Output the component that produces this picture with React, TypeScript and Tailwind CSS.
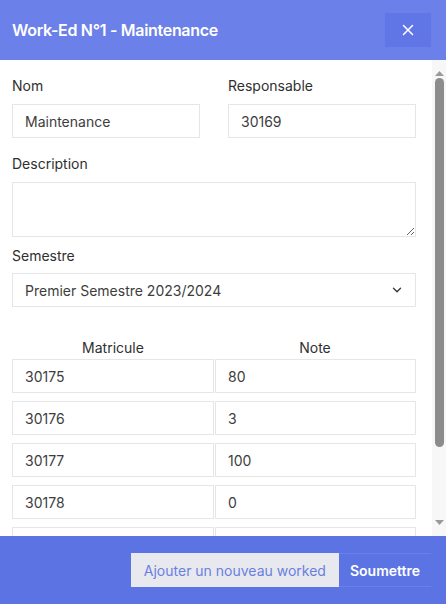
import { X, ChevronDown } from "lucide-react";

const rows = [
  { matricule: "30175", note: "80" },
  { matricule: "30176", note: "3" },
  { matricule: "30177", note: "100" },
  { matricule: "30178", note: "0" },
  { matricule: "30179", note: "45" },
];

function Field({ value, className = "" }: { value: string; className?: string }) {
  return (
    <div
      className={`h-[34px] flex items-center px-3 border border-[#e6e6e6] bg-white text-[14px] text-[#3d3d3d] ${className}`}
    >
      {value}
    </div>
  );
}

function Arrow({ up }: { up?: boolean }) {
  return (
    <svg width="9" height="5" viewBox="0 0 9 5">
      <path d={up ? "M0 5 L4.5 0 L9 5 Z" : "M0 0 L4.5 5 L9 0 Z"} fill="#9a9a9a" />
    </svg>
  );
}

function Scrollbar() {
  return (
    <div className="w-[14px] shrink-0 bg-[#f7f7f7] flex flex-col items-center">
      <div className="h-[16px] flex items-end justify-center">
        <Arrow up />
      </div>
      <div className="mt-[2px] w-[9px] h-[369px] rounded-full bg-[#8c8c8c]" />
      <div className="flex-1" />
      <div className="h-[16px] flex items-start justify-center">
        <Arrow />
      </div>
    </div>
  );
}

export default function App() {
  return (
    <div
      className="w-[446px] h-[604px] flex flex-col bg-white overflow-hidden"
      style={{ fontFamily: "Inter, 'Noto Sans', sans-serif" }}
    >
      <div className="h-[60px] shrink-0 bg-[#6b80e9] flex items-center justify-between pl-3 pr-[15px]">
        <h1 className="text-white text-[16px] font-semibold tracking-[-0.3px]">
          Work-Ed N°1 - Maintenance
        </h1>
        <button className="w-[46px] h-[34px] bg-[#6075e6] flex items-center justify-center text-white">
          <X size={18} strokeWidth={2} />
        </button>
      </div>

      <div className="flex-1 flex min-h-0">
        <div className="flex-1 overflow-hidden pl-3 pr-4 pt-[16px]">
          <div className="grid grid-cols-2 gap-x-7">
            <div>
              <label className="block text-[14px] text-[#2f2f2f] h-[19px] leading-[19px]">Nom</label>
              <Field value="Maintenance" className="mt-[9px]" />
            </div>
            <div>
              <label className="block text-[14px] text-[#2f2f2f] h-[19px] leading-[19px]">Responsable</label>
              <Field value="30169" className="mt-[9px]" />
            </div>
          </div>

          <label className="block mt-[16px] text-[14px] text-[#2f2f2f] h-[19px] leading-[19px]">
            Description
          </label>
          <textarea
            className="block mt-[9px] w-full h-[55px] border border-[#e6e6e6] outline-none resize-y"
            readOnly
          />

          <label className="block mt-[9px] text-[14px] text-[#2f2f2f] h-[19px] leading-[19px]">
            Semestre
          </label>
          <div className="mt-[8px] h-[34px] flex items-center justify-between pl-3 pr-[11px] border border-[#e6e6e6] text-[14px] text-[#3d3d3d]">
            <span>Premier Semestre 2023/2024</span>
            <ChevronDown size={14} strokeWidth={2.2} className="text-[#333]" />
          </div>

          <div className="mt-[31px] grid grid-cols-2 text-[14px] text-[#2f2f2f] text-center h-[19px] leading-[19px]">
            <span>Matricule</span>
            <span>Note</span>
          </div>
          <div className="mt-[2px] flex flex-col gap-2 pb-4">
            {rows.map((r) => (
              <div key={r.matricule} className="grid grid-cols-[202px_1fr] gap-x-px">
                <Field value={r.matricule} />
                <Field value={r.note} />
              </div>
            ))}
          </div>
        </div>
        <Scrollbar />
      </div>

      <div className="h-[68px] shrink-0 bg-[#5c73e4] flex items-center justify-end pr-[15px]">
        <button className="h-[34px] px-[13px] bg-[#e8e9ee] text-[#6b7fe0] text-[14px]">
          Ajouter un nouveau worked
        </button>
        <button className="h-[34px] px-[11px] border-y border-[#6a7fe8] text-white text-[14px] font-semibold">
          Soumettre
        </button>
      </div>
    </div>
  );
}
